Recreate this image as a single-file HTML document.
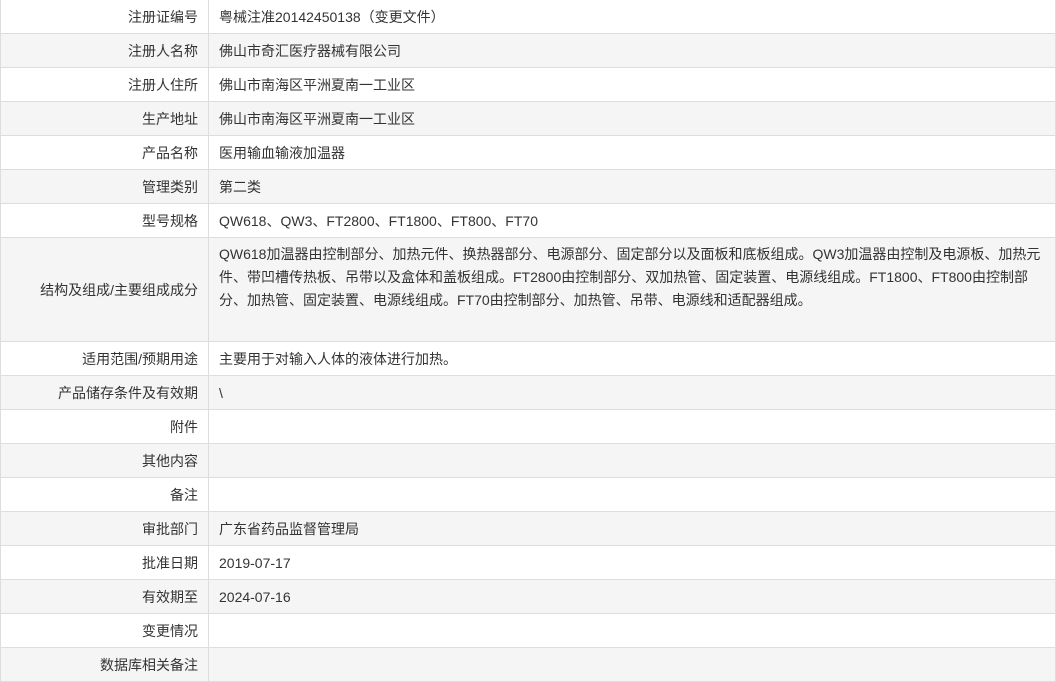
<!DOCTYPE html>
<html><head><meta charset="utf-8"><style>
body{margin:0;background:#fff;font-family:"Liberation Sans","Noto Sans CJK SC",sans-serif;font-size:14px;color:#333}
table{border-collapse:collapse;width:1056px;table-layout:fixed;margin-top:-1px}
td{border:1px solid #ddd;height:33px;padding:0;vertical-align:middle}
td.l{width:197px;text-align:right;padding-right:10px}
td.v{padding-left:10px;padding-right:8px}
tr:nth-child(even) td{background:#f5f5f5}
td.t{vertical-align:top;padding-top:5px;line-height:23px;height:98px}
</style></head><body>
<table>
<tr><td class="l">注册证编号</td><td class="v">粤械注准20142450138（变更文件）</td></tr>
<tr><td class="l">注册人名称</td><td class="v">佛山市奇汇医疗器械有限公司</td></tr>
<tr><td class="l">注册人住所</td><td class="v">佛山市南海区平洲夏南一工业区</td></tr>
<tr><td class="l">生产地址</td><td class="v">佛山市南海区平洲夏南一工业区</td></tr>
<tr><td class="l">产品名称</td><td class="v">医用输血输液加温器</td></tr>
<tr><td class="l">管理类别</td><td class="v">第二类</td></tr>
<tr><td class="l">型号规格</td><td class="v">QW618、QW3、FT2800、FT1800、FT800、FT70</td></tr>
<tr><td class="l">结构及组成/主要组成成分</td><td class="v t">QW618加温器由控制部分、加热元件、换热器部分、电源部分、固定部分以及面板和底板组成。QW3加温器由控制及电源板、加热元<br>件、带凹槽传热板、吊带以及盒体和盖板组成。FT2800由控制部分、双加热管、固定装置、电源线组成。FT1800、FT800由控制部<br>分、加热管、固定装置、电源线组成。FT70由控制部分、加热管、吊带、电源线和适配器组成。</td></tr>
<tr><td class="l">适用范围/预期用途</td><td class="v">主要用于对输入人体的液体进行加热。</td></tr>
<tr><td class="l">产品储存条件及有效期</td><td class="v">\</td></tr>
<tr><td class="l">附件</td><td class="v"></td></tr>
<tr><td class="l">其他内容</td><td class="v"></td></tr>
<tr><td class="l">备注</td><td class="v"></td></tr>
<tr><td class="l">审批部门</td><td class="v">广东省药品监督管理局</td></tr>
<tr><td class="l">批准日期</td><td class="v">2019-07-17</td></tr>
<tr><td class="l">有效期至</td><td class="v">2024-07-16</td></tr>
<tr><td class="l">变更情况</td><td class="v"></td></tr>
<tr><td class="l">数据库相关备注</td><td class="v"></td></tr>
</table>
</body></html>
